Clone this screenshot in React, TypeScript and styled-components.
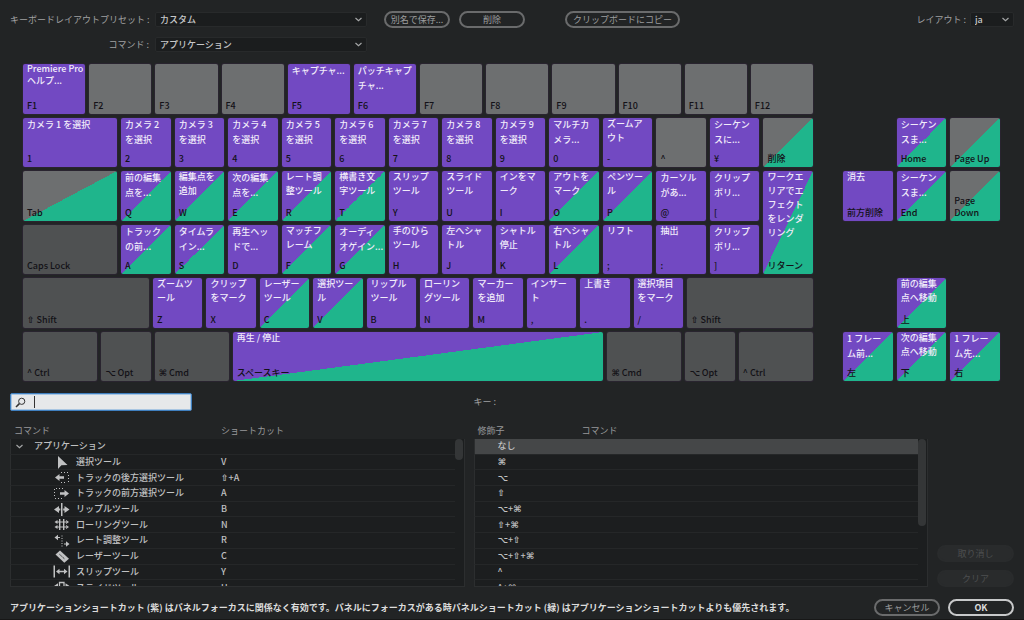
import React from "react";
import styled, { createGlobalStyle, css } from "styled-components";

const Global = createGlobalStyle`
  * { box-sizing: border-box; }
  body {
    margin: 0;
    background: #222425;
    color: #a0a1a2;
    font: 400 9px/12px "Noto Sans CJK JP", "DejaVu Sans", sans-serif;
  }
  button, input, select { font: inherit; color: inherit; }
`;

const Dialog = styled.main`
  display: flex;
  flex-direction: column;
  min-height: 100vh;
  padding: 11px 0 3px;
  border-bottom: 1px solid #171717;
`;

const Header = styled.header`
  display: grid;
  grid-template-columns: 139px 212px 1fr auto;
  grid-auto-rows: 17px;
  align-items: center;
  gap: 8px 6px;
  padding: 0 10px;
`;

const Label = styled.label`
  text-align: right;
  white-space: pre;
`;

const SelectBox = styled.div`
  display: grid;
  align-items: center;
  height: 15px;
  background: #1b1d1e;
  border: 1px solid #282a2b;
  border-radius: 2px;
  color: #c6c7c8;
  font-weight: 500;
  svg, select { grid-area: 1 / 1; }
  svg { justify-self: end; margin-right: 3px; pointer-events: none; }
`;

const Select = styled.select`
  appearance: none;
  width: 100%;
  height: 13px;
  padding: 0 4px;
  line-height: 13px;
  background: transparent;
  border: 0;
  outline: none;
`;

const Actions = styled.div`
  display: flex;
  gap: 9px;
  padding-left: 11px;
`;

const LayoutPicker = styled.div`
  display: flex;
  align-items: center;
  gap: 4px;
  ${SelectBox} { width: 44px; }
`;

const Pill = styled.button<{ $tone?: "strong" | "off"; $apart?: boolean; $wide?: boolean }>`
  width: ${p => (p.$wide ? 115 : 66)}px;
  height: 17px;
  padding: 0;
  margin-left: ${p => (p.$apart ? 31 : 0)}px;
  line-height: 13px;
  border: 2px solid #6a6b6c;
  border-radius: 9px;
  background: transparent;
  color: #9c9d9e;
  ${p => p.$tone === "strong" && css`border-color: #c8c9ca; color: #dcdcdc; font-weight: 700;`}
  ${p => p.$tone === "off" && css`width: 100%; border-color: #292b2c; background: #292b2c; color: #4d4f50;`}
`;

const Boards = styled.section`
  display: grid;
  grid-template-columns: 1fr 157px;
  gap: 30px;
  height: 317px;
  margin: 11px 24px 0 23px;
`;

const Board = styled.div`
  display: grid;
  grid-template-rows: repeat(6, minmax(0, 1fr));
  gap: 4px;
`;

const Row = styled.div<{ $cols: string; $rows?: number }>`
  display: grid;
  grid-row: span ${p => p.$rows ?? 1};
  grid-template-columns: ${p => p.$cols};
  grid-template-rows: repeat(${p => p.$rows ?? 1}, minmax(0, 1fr));
  gap: 4px;
`;

const NavBoard = styled.div`
  display: grid;
  grid-template: repeat(6, minmax(0, 1fr)) / repeat(3, minmax(0, 1fr));
  gap: 4px;
`;

const P = "#7249c2";
const G = "#1fb58c";
const N = "#6d6f70";
const fills = {
  p: P,
  n: N,
  m: "#4f5152",
  pg: `linear-gradient(to bottom right, ${P} 50%, ${G} 50%)`,
  ng: `linear-gradient(to bottom right, ${N} 50%, ${G} 50%)`,
};
type Fill = keyof typeof fills;

const KeyCap = styled.button<{ $fill: Fill; $area?: string }>`
  display: flex;
  flex-direction: column;
  justify-content: space-between;
  align-items: flex-start;
  min-width: 0;
  padding: 0 0 2px 4px;
  border: 0;
  border-radius: 2px;
  background: ${p => fills[p.$fill]};
  box-shadow: 0 0 0 1px #29242f;
  text-align: left;
  ${p => p.$area && css`grid-area: ${p.$area};`}
`;

const KeyCommand = styled.span<{ $pitch: number }>`
  margin-top: -1px;
  color: #f1ecfa;
  font-weight: 500;
  line-height: ${p => p.$pitch}px;
  white-space: pre;
`;

const KeyName = styled.span`
  color: #131117;
  font-weight: 500;
  white-space: pre;
`;

const Glyph = styled.span`
  font-family: "DejaVu Sans", sans-serif;
  font-weight: 700;
  line-height: 1;
`;

/* Sets the modifier symbols of a shortcut in the symbol face. */
function Shortcut({ text }: { text: string }) {
  return (
    <span>
      {text.split(/([⌘⌥⇧])/).map((part, i) => (i % 2 ? <Glyph key={i}>{part}</Glyph> : part))}
    </span>
  );
}

type KeyDef = [name: string, fill: Fill, command?: string, area?: string];

function pitchOf(command: string) {
  if (/^[A-Z]/.test(command)) return 12;
  return /[.\d]/.test(command) ? 15 : 14;
}

function Key({ def: [name, fill, command = "", area] }: { def: KeyDef }) {
  return (
    <KeyCap type="button" $fill={fill} $area={area}>
      <KeyCommand $pitch={pitchOf(command)}>{command}</KeyCommand>
      <KeyName><Shortcut text={name} /></KeyName>
    </KeyCap>
  );
}

const functionKeys: KeyDef[] = [
  ["F1", "p", "Premiere Pro\nヘルプ..."],
  ["F2", "n"], ["F3", "n"], ["F4", "n"],
  ["F5", "p", "キャプチャ..."],
  ["F6", "p", "パッチキャプ\nチャ..."],
  ["F7", "n"], ["F8", "n"], ["F9", "n"], ["F10", "n"], ["F11", "n"], ["F12", "n"],
];

const letterKeys: KeyDef[] = [
  ["1", "p", "カメラ 1 を選択"],
  ["2", "p", "カメラ 2\nを選択"],
  ["3", "p", "カメラ 3\nを選択"],
  ["4", "p", "カメラ 4\nを選択"],
  ["5", "p", "カメラ 5\nを選択"],
  ["6", "p", "カメラ 6\nを選択"],
  ["7", "p", "カメラ 7\nを選択"],
  ["8", "p", "カメラ 8\nを選択"],
  ["9", "p", "カメラ 9\nを選択"],
  ["0", "p", "マルチカ\nメラ..."],
  ["-", "p", "ズームア\nウト"],
  ["^", "n"],
  ["¥", "p", "シーケン\nスに..."],
  ["削除", "ng"],
  ["Tab", "ng"],
  ["Q", "pg", "前の編集\n点を..."],
  ["W", "pg", "編集点を\n追加"],
  ["E", "pg", "次の編集\n点を..."],
  ["R", "pg", "レート調\n整ツール"],
  ["T", "pg", "横書き文\n字ツール"],
  ["Y", "p", "スリップ\nツール"],
  ["U", "p", "スライド\nツール"],
  ["I", "p", "インをマ\nーク"],
  ["O", "pg", "アウトを\nマーク"],
  ["P", "pg", "ペンツー\nル"],
  ["@", "p", "カーソル\nがあ..."],
  ["[", "p", "クリップ\nボリ..."],
  ["リターン", "pg", "ワークエ\nリアでエ\nフェクト\nをレンダ\nリング", "2 / 14 / span 2 / auto"],
  ["Caps Lock", "m"],
  ["A", "pg", "トラック\nの前..."],
  ["S", "pg", "タイムラ\nイン..."],
  ["D", "p", "再生ヘッ\nドで..."],
  ["F", "pg", "マッチフ\nレーム"],
  ["G", "pg", "オーディ\nオゲイン..."],
  ["H", "p", "手のひら\nツール"],
  ["J", "p", "左へシャ\nトル"],
  ["K", "p", "シャトル\n停止"],
  ["L", "pg", "右へシャ\nトル"],
  [";", "p", "リフト"],
  [":", "p", "抽出"],
  ["]", "p", "クリップ\nボリ..."],
];

const shiftKeys: KeyDef[] = [
  ["⇧ Shift", "m"],
  ["Z", "p", "ズームツ\nール"],
  ["X", "p", "クリップ\nをマーク"],
  ["C", "pg", "レーザー\nツール"],
  ["V", "pg", "選択ツー\nル"],
  ["B", "p", "リップル\nツール"],
  ["N", "p", "ローリン\nグツール"],
  ["M", "p", "マーカー\nを追加"],
  [",", "p", "インサー\nト"],
  [".", "p", "上書き"],
  ["/", "p", "選択項目\nをマーク"],
  ["⇧ Shift", "m"],
];

const bottomKeys: KeyDef[] = [
  ["^ Ctrl", "m"],
  ["⌥ Opt", "m"],
  ["⌘ Cmd", "m"],
  ["スペースキー", "pg", "再生 / 停止"],
  ["⌘ Cmd", "m"],
  ["⌥ Opt", "m"],
  ["^ Ctrl", "m"],
];

const navKeys: KeyDef[] = [
  ["Home", "pg", "シーケン\nスま...", "2 / 2"],
  ["Page Up", "ng", "", "2 / 3"],
  ["前方削除", "p", "消去", "3 / 1"],
  ["End", "pg", "シーケン\nスま...", "3 / 2"],
  ["Page\nDown", "ng", "", "3 / 3"],
  ["上", "pg", "前の編集\n点へ移動", "5 / 2"],
  ["左", "pg", "1 フレー\nム前...", "6 / 1"],
  ["下", "pg", "次の編集\n点へ移動", "6 / 2"],
  ["右", "pg", "1 フレー\nム先...", "6 / 3"],
];

const Lower = styled.section`
  display: grid;
  grid-template-columns: 1fr 1fr 77px;
  gap: 12px 9px;
  padding: 12px 10px 0;
`;

const SearchBox = styled.div`
  display: flex;
  align-items: center;
  width: 182px;
  height: 18px;
  padding-left: 4px;
  background: #e6e8ea;
  border: 1px solid #3f7fbf;
  box-shadow: inset 0 0 0 1px #a9c6e2;
  border-radius: 2px;
  color: #222;
`;

const Caret = styled.span`
  width: 1px;
  height: 12px;
  margin-left: 8px;
  background: #333;
`;

const SearchInput = styled.input`
  flex: 1;
  min-width: 0;
  padding: 0;
  border: 0;
  outline: 0;
  background: transparent;
`;

const KeyCaption = styled.p`
  grid-column: 2 / 4;
  align-self: center;
  margin: 0;
  white-space: pre;
`;

const List = styled.div`
  display: grid;
  grid-template-columns: 1fr 10px;
  height: 164px;
  overflow: hidden;
  border-bottom: 1px solid #2c2e2f;
`;

const Track = styled.div`
  margin-top: 16px;
  background: #1c1e1f;
  border-right: 1px solid #2c2e2f;
`;

const Thumb = styled.div<{ $long?: boolean }>`
  width: 8px;
  height: ${p => (p.$long ? 87 : 21)}px;
  border-radius: 4px;
  background: #343637;
`;

const Table = styled.table`
  width: 100%;
  height: 173px;
  border-collapse: separate;
  border-spacing: 0;
  table-layout: fixed;
  th, td { padding: 0; text-align: left; line-height: 12px; }
`;

const Th = styled.th<{ $width?: number }>`
  width: ${p => (p.$width ? `${p.$width}px` : "auto")};
  height: 16px;
  font-weight: 400;
  color: #97989a;
  && { padding-left: 4px; }
`;

const Tr = styled.tr<{ $selected?: boolean }>`
  td {
    border-bottom: 1px solid #252728;
    background: ${p => (p.$selected ? "#454748" : "#1c1e1f")};
    color: #c0c1c2;
    font-weight: 500;
  }
  td:first-child { border-left: 1px solid #2c2e2f; }
`;

const Cell = styled.div<{ $indent: number }>`
  display: flex;
  align-items: center;
  gap: 5px;
  height: 14px;
  padding-left: ${p => p.$indent}px;
  white-space: nowrap;
`;

const Side = styled.div`
  display: flex;
  flex-direction: column;
  justify-content: flex-end;
  gap: 8px;
`;

const Footer = styled.footer`
  display: flex;
  align-items: center;
  gap: 8px;
  padding: 12px 10px 0;
`;

const Note = styled.p`
  flex: 1;
  margin: 0;
  color: #dcdcdc;
  font-weight: 700;
`;

const Chevron = () => (
  <svg width="9" height="7" viewBox="0 0 9 7" fill="none" stroke="#a6a7a8" strokeWidth="1.200">
    <path d="M1.500 2l3 2.600 3-2.600" />
  </svg>
);

const SearchIcon = () => (
  <svg width="11" height="11" viewBox="0 0 11 11" fill="none" stroke="#333" strokeWidth="1">
    <circle cx="6.700" cy="4.300" r="3.100" />
    <path d="M4.400 6.600L1 10" strokeWidth="1.500" />
  </svg>
);

const toolDrawings: Record<string, React.ReactNode> = {
  select: <path d="M5 0v13l3.400-3.700 6.100-.2z" />,
  trackBack: (
    <>
      <path d="M2 6.500l4.500-3.500v2.200H11v2.600H6.500V10z" />
      <path d="M8 1h1v1H8zM11 1h1v1h-1zM14 1h1v1h-1zM15 4h1v1h-1zM15 7h1v1h-1zM15 10h1v1h-1zM8 11h1v1H8zM11 11h1v1h-1zM14 12h1v0h-1z" />
    </>
  ),
  trackForward: (
    <>
      <path d="M16 6.500L11.500 3v2.200H7v2.600h4.500V10z" />
      <path d="M9 1h1v1H9zM6 1h1v1H6zM3 1h1v1H3zM1 2h1v1H1zM1 5h1v1H1zM1 8h1v1H1zM2 11h1v1H2zM5 11h1v1H5zM8 11h1v1H8z" />
    </>
  ),
  ripple: <path d="M8 0h1.500v13H8zM1 6.500l5-3.500v2.500h1.300v2H6V10zM16.500 6.500l-5-3.500v2.500h-1.300v2h1.300V10z" />,
  rolling: (
    <path d="M6 1h1.400v11H6zM10 1h1.400v11H10zM4 3.400h9.500v1.200H4zM4 8.400h9.500v1.200H4zM1.500 4l3-2v4zM16 4l-3-2v4zM1.500 9l3-2v4zM16 9l-3-2v4z" />
  ),
  rate: (
    <>
      <path d="M1.500 3.500l3.500-2.700v2.100h2v1.200H5v2.100zM16.500 10L13 7.300v2.100h-2v1.200h2v2.100z" />
      <path d="M8.500 1.500h1v1h-1zM8.500 4h1v1h-1zM8.500 6.500h1v1h-1zM8.500 9h1v1h-1zM8.500 11.500h1v1h-1z" />
    </>
  ),
  razor: (
    <>
      <path d="M7 .5l9 8.300-4.700 3.900-8.800-8.200z" />
      <path d="M6.500 4.300l5.400 4.900" stroke="#1c1e1f" strokeWidth="1" strokeDasharray="1.500 1" />
    </>
  ),
  slip: <path d="M.5.500H2v12H.5zM15.500.500H17v12h-1.500zM3 6.500l3.500-2.800v2.100H11V3.700l3.500 2.800L11 9.300V7.200H6.500v2.100z" />,
  slide: (
    <>
      <path d="M1 5l4-2.800v5.600zM16.500 5l-4-2.800v5.600z" />
      <path d="M6.500 12V1.500h4.500V12" fill="none" stroke="currentColor" strokeWidth="1.300" />
    </>
  ),
};

const ToolIcon = ({ name }: { name: string }) => (
  <svg width="18" height="13" viewBox="0 0 18 13" fill="currentColor">
    {toolDrawings[name]}
  </svg>
);

const tools = [
  ["select", "選択ツール", "V"],
  ["trackBack", "トラックの後方選択ツール", "⇧+A"],
  ["trackForward", "トラックの前方選択ツール", "A"],
  ["ripple", "リップルツール", "B"],
  ["rolling", "ローリングツール", "N"],
  ["rate", "レート調整ツール", "R"],
  ["razor", "レーザーツール", "C"],
  ["slip", "スリップツール", "Y"],
  ["slide", "スライドツール", "U"],
];

const modifiers = ["なし", "⌘", "⌥", "⇧", "⌥+⌘", "⇧+⌘", "⌥+⇧", "⌥+⇧+⌘", "^", "^+⌘"];

const render = (keys: KeyDef[]) => keys.map((def, i) => <Key key={i} def={def} />);

export default function App() {
  return (
    <Dialog>
      <Global />
      <Header>
        <Label htmlFor="preset">キーボードレイアウトプリセット :</Label>
        <SelectBox>
          <Select id="preset"><option>カスタム</option></Select>
          <Chevron />
        </SelectBox>
        <Actions>
          <Pill type="button">別名で保存...</Pill>
          <Pill type="button">削除</Pill>
          <Pill type="button" $apart $wide>クリップボードにコピー</Pill>
        </Actions>
        <LayoutPicker>
          <Label htmlFor="layout">レイアウト :</Label>
          <SelectBox>
            <Select id="layout"><option>ja</option></Select>
            <Chevron />
          </SelectBox>
        </LayoutPicker>
        <Label htmlFor="command">コマンド :</Label>
        <SelectBox>
          <Select id="command"><option>アプリケーション</option></Select>
          <Chevron />
        </SelectBox>
      </Header>

      <Boards>
        <Board>
          <Row $cols="repeat(12, minmax(0, 1fr))">{render(functionKeys)}</Row>
          <Row $rows={3} $cols="minmax(0, 19fr) repeat(13, minmax(0, 10fr))">{render(letterKeys)}</Row>
          <Row $cols="minmax(0, 51fr) repeat(10, minmax(0, 20fr)) minmax(0, 51fr)">{render(shiftKeys)}</Row>
          <Row $cols="3fr 2fr 3fr 15fr 3fr 2fr 3fr">{render(bottomKeys)}</Row>
        </Board>
        <NavBoard>{render(navKeys)}</NavBoard>
      </Boards>

      <Lower>
        <SearchBox>
          <SearchIcon />
          <Caret />
          <SearchInput type="text" aria-label="検索" />
        </SearchBox>
        <KeyCaption>キー :</KeyCaption>

        <List>
          <Table>
            <thead>
              <tr><Th $width={207}>コマンド</Th><Th>ショートカット</Th></tr>
            </thead>
            <tbody>
              <Tr>
                <td><Cell $indent={4}><Chevron /><Cell as="span" $indent={5}>アプリケーション</Cell></Cell></td>
                <td />
              </Tr>
              {tools.map(([icon, label, shortcut]) => (
                <Tr key={icon}>
                  <td><Cell $indent={42}><ToolIcon name={icon} />{label}</Cell></td>
                  <td><Cell $indent={4}><Shortcut text={shortcut} /></Cell></td>
                </Tr>
              ))}
            </tbody>
          </Table>
          <Track><Thumb /></Track>
        </List>

        <List>
          <Table>
            <thead>
              <tr><Th $width={104}>修飾子</Th><Th>コマンド</Th></tr>
            </thead>
            <tbody>
              {modifiers.map((m, i) => (
                <Tr key={m} $selected={i === 0}>
                  <td><Cell $indent={23}><Shortcut text={m} /></Cell></td>
                  <td />
                </Tr>
              ))}
            </tbody>
          </Table>
          <Track><Thumb $long /></Track>
        </List>

        <Side>
          <Pill type="button" $tone="off" disabled>取り消し</Pill>
          <Pill type="button" $tone="off" disabled>クリア</Pill>
        </Side>
      </Lower>

      <Footer>
        <Note>
          アプリケーションショートカット (紫) はパネルフォーカスに関係なく有効です。パネルにフォーカスがある時パネルショートカット (緑) はアプリケーションショートカットよりも優先されます。
        </Note>
        <Pill type="button">キャンセル</Pill>
        <Pill type="button" $tone="strong">OK</Pill>
      </Footer>
    </Dialog>
  );
}
